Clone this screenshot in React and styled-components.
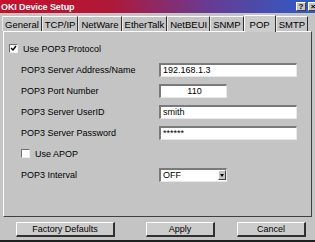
import styled, { createGlobalStyle } from 'styled-components';

const GlobalStyle = createGlobalStyle`
  html, body {
    margin: 0;
    padding: 0;
    background: #c4c4c4;
  }
`;

const Window = styled.div`
  width: 315px;
  height: 242px;
  box-sizing: border-box;
  display: flex;
  flex-direction: column;
  background: #c4c4c4;
  font-family: 'Liberation Sans', Arial, sans-serif;
  font-size: 9px;
  color: #000;
  border-bottom: 2px solid #202020;
  overflow: hidden;
`;

const TitleBar = styled.div`
  height: 13px;
  flex: none;
  display: flex;
  align-items: center;
  justify-content: space-between;
  background: linear-gradient(to right, #c8102a 0%, #b01838 35%, #6a3a90 65%, #2c5cc8 100%);
  padding-left: 1px;
`;

const Title = styled.span`
  color: #fff;
  font-weight: bold;
  font-size: 9px;
  letter-spacing: -0.1px;
`;

const TitleButtons = styled.div`
  display: flex;
  gap: 2px;
  margin-right: -3px;
`;

const TitleButton = styled.div`
  width: 10px;
  height: 9px;
  box-sizing: border-box;
  background: #c4c4c4;
  border-top: 1px solid #fff;
  border-left: 1px solid #fff;
  border-right: 1px solid #404040;
  border-bottom: 1px solid #404040;
  font-size: 8px;
  font-weight: bold;
  line-height: 7px;
  text-align: center;
  color: #000;
`;

const TabStrip = styled.div`
  height: 18px;
  flex: none;
  display: flex;
  align-items: flex-end;
  padding-left: 2px;
`;

const Tab = styled.div`
  height: ${({ active }) => (active ? 17 : 15)}px;
  box-sizing: border-box;
  padding: 0 ${({ active }) => (active ? 5 : 2)}px;
  display: flex;
  align-items: center;
  border-top: 1px solid #fff;
  border-left: 1px solid ${({ active }) => (active ? '#fff' : '#e8e8e8')};
  border-right: 1px solid #303030;
  background: ${({ active }) => (active ? '#cccccc' : '#c4c4c4')};
  font-size: 9.5px;
  white-space: nowrap;
  margin-bottom: ${({ active }) => (active ? -1 : 0)}px;
  position: relative;
  z-index: ${({ active }) => (active ? 1 : 0)};
`;

const Panel = styled.div`
  flex: none;
  height: 186px;
  margin: 0 3px 0 3px;
  box-sizing: border-box;
  border-top: 1px solid #fff;
  border-left: 1px solid #fff;
  border-right: 1px solid #404040;
  border-bottom: 1px solid #404040;
  padding: 6px 0 0 5px;
  display: flex;
  flex-direction: column;
`;

const Row = styled.div`
  height: 21px;
  display: flex;
  align-items: center;
  padding-left: ${({ indent }) => indent}px;
`;

const Label = styled.span`
  width: 138px;
  flex: none;
  white-space: nowrap;
`;

const CheckLabel = styled.label`
  display: flex;
  align-items: center;
  gap: 5px;
`;

const Box = styled.span`
  width: 9px;
  height: 9px;
  box-sizing: border-box;
  background: #fff;
  border-top: 1px solid #707070;
  border-left: 1px solid #707070;
  border-right: 1px solid #f0f0f0;
  border-bottom: 1px solid #f0f0f0;
  display: flex;
  align-items: center;
  justify-content: center;
`;

const Field = styled.div`
  width: ${({ w }) => w}px;
  height: 14px;
  box-sizing: border-box;
  background: #fff;
  border-top: 2px solid #7a7a7a;
  border-left: 2px solid #7a7a7a;
  border-right: 1px solid #e8e8e8;
  border-bottom: 1px solid #e8e8e8;
  padding-left: 2px;
  display: flex;
  align-items: center;
  justify-content: ${({ center }) => (center ? 'center' : 'flex-start')};
  font-size: 9px;
  white-space: nowrap;
`;

const SelectBox = styled(Field)`
  justify-content: space-between;
  padding-right: 0;
`;

const DropButton = styled.span`
  width: 8px;
  height: 10px;
  box-sizing: border-box;
  background: #c4c4c4;
  border-top: 1px solid #fff;
  border-left: 1px solid #fff;
  border-right: 1px solid #404040;
  border-bottom: 1px solid #404040;
  display: flex;
  align-items: center;
  justify-content: center;
`;

const ButtonRow = styled.div`
  flex: 1;
  display: flex;
  align-items: center;
  padding: 2px 0 0 16px;
`;

const Button = styled.div`
  width: ${({ w }) => w}px;
  height: 15px;
  margin-left: ${({ gap }) => gap || 0}px;
  box-sizing: border-box;
  background: #cccccc;
  border-top: 1px solid #fff;
  border-left: 1px solid #fff;
  border-right: 2px solid #303030;
  border-bottom: 2px solid #303030;
  display: flex;
  align-items: center;
  justify-content: center;
  white-space: nowrap;
`;

const Check = () => (
  <svg width="7" height="7" viewBox="0 0 7 7">
    <path d="M1 3 L3 5 L6 1" stroke="#000" strokeWidth="1.4" fill="none" />
  </svg>
);

const tabs = ['General', 'TCP/IP', 'NetWare', 'EtherTalk', 'NetBEUI', 'SNMP', 'POP', 'SMTP'];

const fields = [
  { label: 'POP3 Server Address/Name', value: '192.168.1.3', w: 138 },
  { label: 'POP3 Port Number', value: '110', w: 68, center: true },
  { label: 'POP3 Server UserID', value: 'smith', w: 138 },
  { label: 'POP3 Server Password', value: '******', w: 138 },
];

export default function App() {
  return (
    <>
      <GlobalStyle />
      <Window>
        <TitleBar>
          <Title>OKI Device Setup</Title>
          <TitleButtons>
            <TitleButton>?</TitleButton>
            <TitleButton>×</TitleButton>
          </TitleButtons>
        </TitleBar>
        <TabStrip>
          {tabs.map((t) => (
            <Tab key={t} active={t === 'POP'}>{t}</Tab>
          ))}
        </TabStrip>
        <Panel>
          <Row indent={0}>
            <CheckLabel>
              <Box><Check /></Box>
              Use POP3 Protocol
            </CheckLabel>
          </Row>
          {fields.map((f) => (
            <Row key={f.label} indent={12}>
              <Label>{f.label}</Label>
              <Field w={f.w} center={f.center}>{f.value}</Field>
            </Row>
          ))}
          <Row indent={12}>
            <CheckLabel>
              <Box />
              Use APOP
            </CheckLabel>
          </Row>
          <Row indent={12}>
            <Label>POP3 Interval</Label>
            <SelectBox w={68}>
              OFF
              <DropButton>
                <svg width="4" height="3" viewBox="0 0 4 3">
                  <path d="M0 0 H4 L2 3 Z" fill="#000" />
                </svg>
              </DropButton>
            </SelectBox>
          </Row>
        </Panel>
        <ButtonRow>
          <Button w={99}>Factory Defaults</Button>
          <Button w={69} gap={31}>Apply</Button>
          <Button w={69} gap={22}>Cancel</Button>
        </ButtonRow>
      </Window>
    </>
  );
}
